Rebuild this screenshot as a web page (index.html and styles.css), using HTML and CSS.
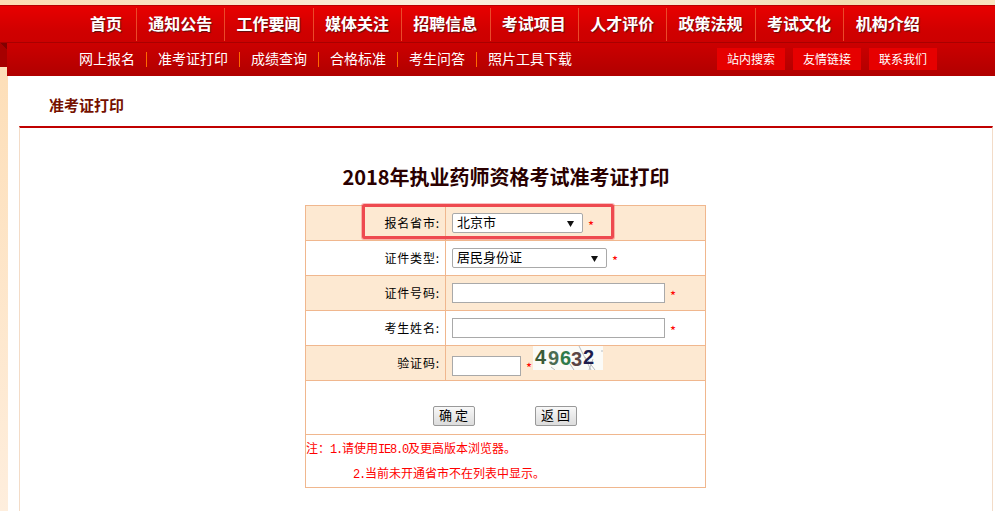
FILE: index.html
```html
<!DOCTYPE html>
<html lang="zh-CN">
<head>
<meta charset="utf-8">
<title>准考证打印</title>
<link rel="stylesheet" href="styles.css">
</head>
<body>
<div class="top-strip"></div>
<nav class="main-nav">
  <a class="nav-item nav-first">首页</a>
  <a class="nav-item">通知公告</a>
  <a class="nav-item">工作要闻</a>
  <a class="nav-item">媒体关注</a>
  <a class="nav-item">招聘信息</a>
  <a class="nav-item">考试项目</a>
  <a class="nav-item">人才评价</a>
  <a class="nav-item">政策法规</a>
  <a class="nav-item">考试文化</a>
  <a class="nav-item nav-last">机构介绍</a>
</nav>
<div class="sub-row">
  <div class="fold"></div>
  <div class="sub-nav">
    <div class="sub-links">
      <a class="sub-link">网上报名</a>
      <a class="sub-link">准考证打印</a>
      <a class="sub-link">成绩查询</a>
      <a class="sub-link">合格标准</a>
      <a class="sub-link">考生问答</a>
      <a class="sub-link sub-last">照片工具下载</a>
    </div>
    <div class="sub-buttons">
      <a class="sub-btn">站内搜索</a>
      <a class="sub-btn">友情链接</a>
      <a class="sub-btn">联系我们</a>
    </div>
  </div>
</div>
<main class="main">
  <h2 class="crumb">准考证打印</h2>
  <section class="panel">
    <h1 class="title">2018年执业药师资格考试准考证打印</h1>
    <div class="form-wrap">
      <table class="form-table">
        <colgroup><col class="col-label"><col class="col-field"></colgroup>
        <tr class="row tint">
          <td class="label">报名省市:</td>
          <td class="value"><div class="field">
            <select class="select select-city"><option>北京市</option></select><span class="req">*</span>
          </div></td>
        </tr>
        <tr class="row">
          <td class="label">证件类型:</td>
          <td class="value"><div class="field">
            <select class="select select-type"><option>居民身份证</option></select><span class="req">*</span>
          </div></td>
        </tr>
        <tr class="row tint">
          <td class="label">证件号码:</td>
          <td class="value"><div class="field">
            <input class="input input-wide" type="text"><span class="req">*</span>
          </div></td>
        </tr>
        <tr class="row">
          <td class="label">考生姓名:</td>
          <td class="value"><div class="field">
            <input class="input input-wide" type="text"><span class="req">*</span>
          </div></td>
        </tr>
        <tr class="row tint">
          <td class="label">验证码:</td>
          <td class="value"><div class="field field-captcha">
            <input class="input input-code" type="text"><span class="req">*</span>
            <svg class="captcha" width="70" height="24" viewBox="0 0 70 24" role="img" aria-label="验证码图片">
              <rect width="70" height="24" fill="#fbfbf8"/>
              <path d="M46 0 L58 24 M52 11 L62 24 M37 18 L41 24 M18 21 L22 24 M56 24 L60 13 M68 5 L70 5" stroke="#b9bcc0" stroke-width="1" fill="none"/>
              <text class="cap-digit" x="2" y="18" fill="#3b5a36">4</text>
              <text class="cap-digit" x="15" y="19" fill="#4b6b52">9</text>
              <text class="cap-digit" x="27" y="19" fill="#2f7a4a">6</text>
              <text class="cap-digit" x="38" y="20" fill="#5a4545">3</text>
              <text class="cap-digit" x="50" y="18" fill="#1d1d4d">2</text>
            </svg>
          </div></td>
        </tr>
        <tr class="row-actions">
          <td class="actions" colspan="2"><div class="action-row">
            <button class="btn" type="button">确 定</button>
            <button class="btn" type="button">返 回</button>
          </div></td>
        </tr>
        <tr class="row-notes">
          <td class="notes" colspan="2">
            <p class="note">注：<span class="latin">1.</span>请使用<span class="latin">IE8.0</span>及更高版本浏览器。</p>
            <p class="note note-indent"><span class="latin">2.</span>当前未开通省市不在列表中显示。</p>
          </td>
        </tr>
      </table>
      <div class="highlight"></div>
    </div>
  </section>
</main>
</body>
</html>
```
FILE: styles.css
```css
* { box-sizing: border-box; }
html, body { margin: 0; padding: 0; }
body {
  height: 511px;
  overflow: hidden;
  font-family: "Noto Sans CJK SC", "Liberation Sans", sans-serif;
  font-size: 12px;
  color: #000;
  background: #fff linear-gradient(#fddcb2, #feeedd) no-repeat 0 0 / 8px 100%;
}
.top-strip {
  height: 5px;
  background: linear-gradient(90deg, #fddcb2 0%, #f9e2c4 20%, #fbeedd 45%, #f6e6cc 70%, #f3dcae 85%, #f8e4c0 100%);
}
.main-nav {
  display: flex;
  height: 38px;
  padding-left: 75px;
  align-items: center;
  border-top: 1px solid #b80000;
  border-bottom: 1px solid #a80000;
  background: linear-gradient(#e80000, #d00000 70%, #cc0000);
}
.nav-item {
  width: 88.4px;
  height: 33px;
  padding-right: 1px;
  line-height: 31px;
  text-align: center;
  color: #fff;
  font-size: 16px;
  font-weight: 700;
  text-shadow: 1px 1px 1px #5a1010;
  border-right: 1px solid #ea4a2a;
}
.nav-first { width: 62px; padding-right: 0; padding-left: 1px; }
.nav-last { border-right: 0; }
.sub-row { display: flex; height: 33px; }
.fold {
  width: 7px;
  height: 24px;
  background: linear-gradient(45deg, #a60000 50%, #800000 50%) no-repeat 0 0 / 7px 7px, #a60000;
}
.sub-nav {
  flex: 1;
  display: flex;
  justify-content: space-between;
  align-items: center;
  padding: 0 58px 0 61px;
  background: linear-gradient(#cc0000, #b00000);
}
.sub-links { display: flex; align-items: center; }
.sub-link {
  padding: 0 11px;
  height: 15px;
  line-height: 13px;
  color: #fff;
  font-size: 14px;
  border-right: 1px solid #ff6a00;
}
.sub-last { border-right: 0; }
.sub-buttons { display: flex; gap: 8px; margin-top: -1px; }
.sub-btn {
  width: 68px;
  height: 22px;
  line-height: 21px;
  text-align: center;
  color: #fff;
  background: #e60000;
}
.main { padding-left: 8px; }
.crumb {
  margin: 0;
  height: 50px;
  padding: 18px 0 0 41px;
  line-height: 21px;
  font-size: 15px;
  font-weight: 700;
  color: #751000;
}
.panel {
  margin: 0 2px 0 11px;
  height: 385px;
  border-top: 2px solid #c00000;
  border-left: 1px solid #f3dcc8;
  border-right: 1px solid #f3dcc8;
}
.title {
  margin: 34px 0 13px;
  height: 30px;
  line-height: 30px;
  text-align: center;
  font-size: 20px;
  font-weight: 700;
  color: #2a0000;
}
.form-wrap {
  position: relative;
  width: 402px;
  margin-left: 285px;
}
.form-table {
  width: 401px;
  table-layout: fixed;
  border-collapse: collapse;
  border: 1px solid #f0b78e;
}
.form-table td { border: 1px solid #f0b78e; padding: 0; }
.col-label { width: 140px; }
.row { height: 35px; }
.tint { background: #fde9d2; }
.form-table .label { text-align: right; padding: 0 5px 2px 0; letter-spacing: .85px; }
.form-table .value { padding-left: 6px; }
.field { display: flex; align-items: center; gap: 5px; }
.field-captcha { height: 34px; padding-top: 5px; }
.select {
  appearance: none;
  -webkit-appearance: none;
  height: 20px;
  padding: 0 0 3px 4px;
  font-family: inherit;
  font-size: 13px;
  line-height: 16px;
  color: #000;
  background: #fff url("data:image/svg+xml,%3Csvg xmlns='http://www.w3.org/2000/svg' width='7' height='6'%3E%3Cpath d='M0 0h7L3.5 6z' fill='%23111'/%3E%3C/svg%3E") no-repeat right 8px top 7px;
  border: 1px solid #a9a9a9;
  border-radius: 2px;
}
.select-city { width: 131px; }
.select-type { width: 155px; }
.input {
  height: 20px;
  padding: 0;
  background: #fff;
  border: 1px solid #a9a9a9;
}
.input-wide { width: 213px; }
.input-code { width: 69px; }
.req { color: #f00; font-size: 13px; line-height: 1; margin-top: 4px; }
.captcha { align-self: flex-start; margin-top: -5px; margin-left: -4px; }
.cap-digit { font-family: "Liberation Sans", sans-serif; font-size: 20px; font-weight: 700; }
.row-actions { height: 54px; }
.actions { vertical-align: bottom; }
.action-row { display: flex; justify-content: center; gap: 60px; padding: 0 2px 8px 0; }
.btn {
  width: 42px;
  height: 20px;
  padding: 0 0 2px;
  font-family: inherit;
  font-size: 13px;
  line-height: 16px;
  color: #000;
  border: 1px solid #999;
  border-radius: 2px;
  background: linear-gradient(#f8f8f8, #dcdcdc);
}
.row-notes { height: 53px; }
.notes { vertical-align: top; color: #f00; }
.note { margin: 0; height: 25px; line-height: 25px; }
.note-indent { padding-left: 47px; }
.latin { font-family: "Liberation Mono", monospace; font-size: 12px; letter-spacing: -1.2px; }
.highlight {
  position: absolute;
  left: 57px;
  top: -1px;
  width: 252px;
  height: 35px;
  border: 3px solid #ee4a50;
  border-radius: 2px;
  box-shadow: 0 0 0 1px rgba(238, 74, 80, .35);
}
```
